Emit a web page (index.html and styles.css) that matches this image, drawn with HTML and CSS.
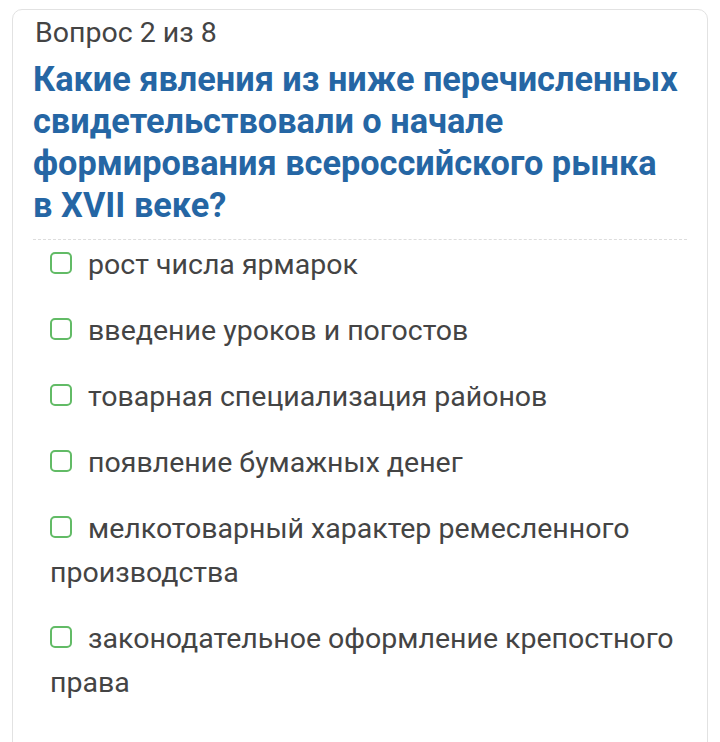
FILE: index.html
```html
<!DOCTYPE html>
<html lang="ru">
<head>
  <meta charset="UTF-8">
  <meta name="viewport" content="width=device-width, initial-scale=1.0">
  <title>Тест</title>
  <link rel="stylesheet" href="styles.css">
</head>
<body>
  <div class="quiz-card">
    <div class="quiz-counter">Вопрос 2 из 8</div>
    <h2 class="quiz-question">Какие явления из ниже перечисленных свидетельствовали о начале формирования всероссийского рынка в XVII веке?</h2>

    <div class="answers">
      <label class="answer"><span class="box"></span> рост числа ярмарок</label>
      <label class="answer"><span class="box"></span> введение уроков и погостов</label>
      <label class="answer"><span class="box"></span> товарная специализация районов</label>
      <label class="answer"><span class="box"></span> появление бумажных денег</label>
      <label class="answer"><span class="box"></span> мелкотоварный характер ремесленного производства</label>
      <label class="answer"><span class="box"></span> законодательное оформление крепостного права</label>
    </div>
  </div>
</body>
</html>
```

FILE: styles.css
```css
body {
  font-family: Roboto, "Noto Sans", sans-serif;
  margin: 0;
  padding: 0;
  background-color: #fff;
  overflow: hidden;
}
.quiz-card {
  margin: 9px 12px 0;
  padding: 8px 20px 40px;
  border: 1px solid #e2e2e2;
  border-radius: 10px;
  min-height: 760px;
}
.quiz-counter {
  font-size: 28.5px;
  line-height: 30px;
  color: #444;
  padding-left: 2px;
}
.quiz-question {
  margin: 10px 0 0;
  font-size: 34.3px;
  line-height: 42px;
  font-weight: bold;
  color: #2566a4;
  padding: 0 6px 13px 0;
  border-bottom: 1px dashed #ddd;
}
.answers {
  margin: 3px 0 0 17px;
}
.answer {
  display: block;
  font-size: 28.5px;
  line-height: 44px;
  color: #444;
  margin-bottom: 22px;
}
.answer .box {
  display: inline-block;
  width: 18px;
  height: 18px;
  border: 2px solid #62bb66;
  border-radius: 5px;
  vertical-align: 0;
  margin-right: 9px;
}
```
